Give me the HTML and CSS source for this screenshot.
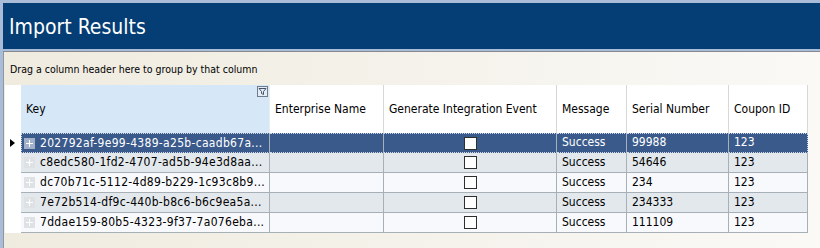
FILE: index.html
```html
<!DOCTYPE html>
<html lang="en">

<head>
    <meta charset="UTF-8">
    <title>Import Results</title>
    <link rel="stylesheet" href="styles.css">
</head>

<body>
    <div class="window">
        <div class="title-bar">
            <h1>Import Results</h1>
        </div>
        <div class="title-rule"></div>

        <div class="panel">
            <div class="group-area">Drag a column header here to group by that column</div>

            <div class="grid">
                <div class="hcell indicator"></div>
                <div class="hcell key-head">
                    Key
                    <span class="filter-btn">
                        <svg width="9" height="9" viewBox="0 0 9 9">
                            <path d="M1 1.5h7L5.5 4.5V7.5L3.5 6.5V4.5Z" fill="none" stroke="#44546a" stroke-width="1"/>
                        </svg>
                    </span>
                </div>
                <div class="hcell">Enterprise Name</div>
                <div class="hcell">Generate Integration Event</div>
                <div class="hcell">Message</div>
                <div class="hcell">Serial Number</div>
                <div class="hcell">Coupon ID</div>

                <div class="row selected">
                    <div class="cell indicator"><span class="arrow"></span></div>
                    <div class="cell key"><span class="expand"></span>202792af-9e99-4389-a25b-caadb67a...</div>
                    <div class="cell"></div>
                    <div class="cell check"><span class="box"></span></div>
                    <div class="cell">Success</div>
                    <div class="cell">99988</div>
                    <div class="cell">123</div>
                </div>
                <div class="row even">
                    <div class="cell indicator"></div>
                    <div class="cell key"><span class="expand"></span>c8edc580-1fd2-4707-ad5b-94e3d8aa...</div>
                    <div class="cell"></div>
                    <div class="cell check"><span class="box"></span></div>
                    <div class="cell">Success</div>
                    <div class="cell">54646</div>
                    <div class="cell">123</div>
                </div>
                <div class="row odd">
                    <div class="cell indicator"></div>
                    <div class="cell key"><span class="expand"></span>dc70b71c-5112-4d89-b229-1c93c8b9...</div>
                    <div class="cell"></div>
                    <div class="cell check"><span class="box"></span></div>
                    <div class="cell">Success</div>
                    <div class="cell">234</div>
                    <div class="cell">123</div>
                </div>
                <div class="row even">
                    <div class="cell indicator"></div>
                    <div class="cell key"><span class="expand"></span>7e72b514-df9c-440b-b8c6-b6c9ea5a...</div>
                    <div class="cell"></div>
                    <div class="cell check"><span class="box"></span></div>
                    <div class="cell">Success</div>
                    <div class="cell">234333</div>
                    <div class="cell">123</div>
                </div>
                <div class="row odd">
                    <div class="cell indicator"></div>
                    <div class="cell key"><span class="expand"></span>7ddae159-80b5-4323-9f37-7a076eba...</div>
                    <div class="cell"></div>
                    <div class="cell check"><span class="box"></span></div>
                    <div class="cell">Success</div>
                    <div class="cell">111109</div>
                    <div class="cell">123</div>
                </div>
            </div>
        </div>
    </div>
</body>

</html>
```

FILE: styles.css
```css
* {
    margin: 0;
    padding: 0;
    box-sizing: border-box;
}

body {
    width: 820px;
    height: 248px;
    overflow: hidden;
    background: #a9bdd8;
    font-family: 'DejaVu Sans Condensed', 'DejaVu Sans', sans-serif;
    font-size: 12px;
    color: #000;
}

.window {
    margin-top: 3px;
    margin-left: 3px;
    height: 245px;
    display: flex;
    flex-direction: column;
}

.title-bar {
    height: 46px;
    background: #043e75;
    display: flex;
    align-items: center;
    padding-left: 6px;
}

h1 {
    font-weight: normal;
    font-size: 21px;
    color: #fff;
    margin-top: 1px;
}

.title-rule {
    height: 3px;
    background: #a9bdd8;
    border-bottom: 1px solid #868a8e;
}

.panel {
    flex: 1;
    background: linear-gradient(to right, #efebdf, #faf9f6);
    border-left: 1px solid #8e97a2;
    padding-left: 1px;
}

.group-area {
    height: 33px;
    line-height: 34px;
    padding-left: 5px;
    font-size: 10.5px;
    color: #000;
}

.grid {
    display: grid;
    grid-template-columns: 16px 249px 114px 173px 70px 102px 79px;
    width: 803px;
    background: #fff;
}

.hcell {
    height: 48px;
    display: flex;
    align-items: center;
    padding-left: 5px;
    background: #fff;
    border-right: 1px solid #d8d8d8;
    color: #000;
    white-space: nowrap;
}

.hcell.indicator {
    border-right: none;
}

.key-head {
    background: #d6e8f8;
    position: relative;
    border-right: 1px solid #e8eef4;
}

.filter-btn {
    position: absolute;
    top: 1px;
    right: 1px;
    width: 11px;
    height: 11px;
    border: 1px solid #6d7b8c;
    background: #e4ecf5;
    display: flex;
    align-items: center;
    justify-content: center;
}

.row {
    display: contents;
}

.cell {
    height: 20px;
    line-height: 19px;
    padding-left: 5px;
    border-right: 1px solid #a7afb7;
    border-bottom: 1px solid #a7afb7;
    white-space: nowrap;
    overflow: hidden;
}

.cell.indicator {
    background: #fff;
    border: none;
    padding-left: 5px;
    display: flex;
    align-items: center;
}

.arrow {
    width: 0;
    height: 0;
    border-top: 4.5px solid transparent;
    border-bottom: 4.5px solid transparent;
    border-left: 5px solid #000;
}

.even .cell {
    background: #e3e8ec;
}

.odd .cell {
    background: #f8f9fc;
}

.selected .cell {
    background: #3a5a8b;
    color: #fff;
    border-top: 1px dotted #d0d8e4;
    border-bottom: 1px dotted #d0d8e4;
    border-right-color: #a7afb7;
    line-height: 17px;
}

.selected .cell.key {
    border-left: 1px dotted #d0d8e4;
    padding-left: 2px;
}

.selected .cell:last-child {
    border-right: 1px dotted #d0d8e4;
}

.odd .cell.indicator,
.even .cell.indicator,
.selected .cell.indicator {
    background: #fff;
    border: none;
}

.cell.key {
    padding-left: 3px;
    display: flex;
    align-items: center;
    letter-spacing: 0.3px;
}

.expand {
    width: 11px;
    height: 11px;
    background: #dfe2e5;
    margin-right: 5px;
    position: relative;
    flex-shrink: 0;
}

.expand::before,
.expand::after {
    content: "";
    position: absolute;
    background: #fff;
}

.expand::before {
    left: 2px;
    top: 5px;
    width: 7px;
    height: 1px;
}

.expand::after {
    left: 5px;
    top: 2px;
    width: 1px;
    height: 7px;
}

.selected .expand {
    background: #a2b1c9;
}

.cell.check {
    display: flex;
    align-items: center;
    justify-content: center;
    padding-left: 0;
}

.box {
    width: 13px;
    height: 13px;
    border: 1px solid #2e2e2e;
    background: #fff;
}
```
